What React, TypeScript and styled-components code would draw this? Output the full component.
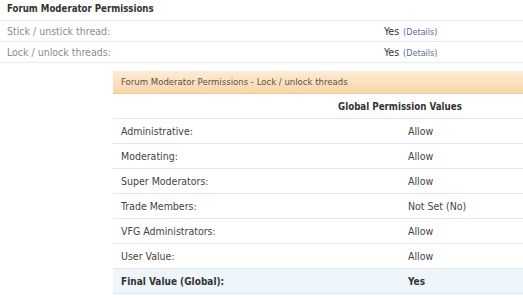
import styled, { createGlobalStyle } from 'styled-components'

const GlobalStyle = createGlobalStyle`
	body {
		margin: 0;
		background: #ffffff;
		font-family: 'DejaVu Sans Condensed', 'DejaVu Sans', sans-serif;
		font-size: 10.5px;
		color: #444444;
	}
`

const Page = styled.div`
	width: 523px;
	height: 300px;
	overflow: hidden;
`

const SectionTitle = styled.div`
	height: 21px;
	line-height: 18px;
	padding-left: 7px;
	font-weight: bold;
	font-size: 9.6px;
	color: #333333;
	border-bottom: 1px solid #e3ecf3;
	box-sizing: border-box;
`

const SummaryRow = styled.div`
	display: grid;
	grid-template-columns: 377px 1fr;
	height: 21px;
	line-height: 21px;
	padding-left: 7px;
	border-bottom: 1px solid #e3ecf3;
	box-sizing: border-box;
`

const SummaryLabel = styled.span`
	color: #8c8c8c;
`

const SummaryValue = styled.span`
	color: #333333;
`

const Details = styled.a`
	margin-left: 4px;
	font-size: 9px;
	color: #5b6d9a;
	text-decoration: none;
`

const Panel = styled.div`
	margin: 8px 0 0 113px;
`

const PanelHeader = styled.div`
	height: 23px;
	line-height: 22px;
	padding-left: 8px;
	font-size: 9.5px;
	color: #5a5045;
	background: linear-gradient(#fdecd6, #f8d6a8);
	border-bottom: 1px solid #f2c994;
	box-sizing: border-box;
`

const ColumnHead = styled.div`
	height: 25px;
	line-height: 25px;
	padding-left: 225px;
	font-weight: bold;
	font-size: 9.7px;
	color: #333333;
	border-bottom: 1px solid #dfe8ef;
	box-sizing: border-box;
`

const Row = styled.div<{ $final?: boolean }>`
	display: grid;
	grid-template-columns: 287px 1fr;
	height: 25px;
	line-height: 25px;
	padding-left: 8px;
	border-bottom: 1px solid #dfe8ef;
	box-sizing: border-box;
	background: ${(p) => (p.$final ? '#eef5fb' : 'transparent')};
	font-weight: ${(p) => (p.$final ? 'bold' : 'normal')};
	font-size: ${(p) => (p.$final ? '10px' : '10.5px')};
	color: ${(p) => (p.$final ? '#333333' : '#444444')};
`

const rows = [
	['Administrative:', 'Allow'],
	['Moderating:', 'Allow'],
	['Super Moderators:', 'Allow'],
	['Trade Members:', 'Not Set (No)'],
	['VFG Administrators:', 'Allow'],
	['User Value:', 'Allow'],
]

const App = () => {
	return (
		<Page>
			<GlobalStyle />
			<SectionTitle>Forum Moderator Permissions</SectionTitle>
			<SummaryRow>
				<SummaryLabel>Stick / unstick thread:</SummaryLabel>
				<SummaryValue>
					Yes<Details href='#'>(Details)</Details>
				</SummaryValue>
			</SummaryRow>
			<SummaryRow>
				<SummaryLabel>Lock / unlock threads:</SummaryLabel>
				<SummaryValue>
					Yes<Details href='#'>(Details)</Details>
				</SummaryValue>
			</SummaryRow>
			<Panel>
				<PanelHeader>Forum Moderator Permissions - Lock / unlock threads</PanelHeader>
				<ColumnHead>Global Permission Values</ColumnHead>
				{rows.map(([label, value]) => (
					<Row key={label}>
						<span>{label}</span>
						<span>{value}</span>
					</Row>
				))}
				<Row $final>
					<span>Final Value (Global):</span>
					<span>Yes</span>
				</Row>
			</Panel>
		</Page>
	)
}

export default App
